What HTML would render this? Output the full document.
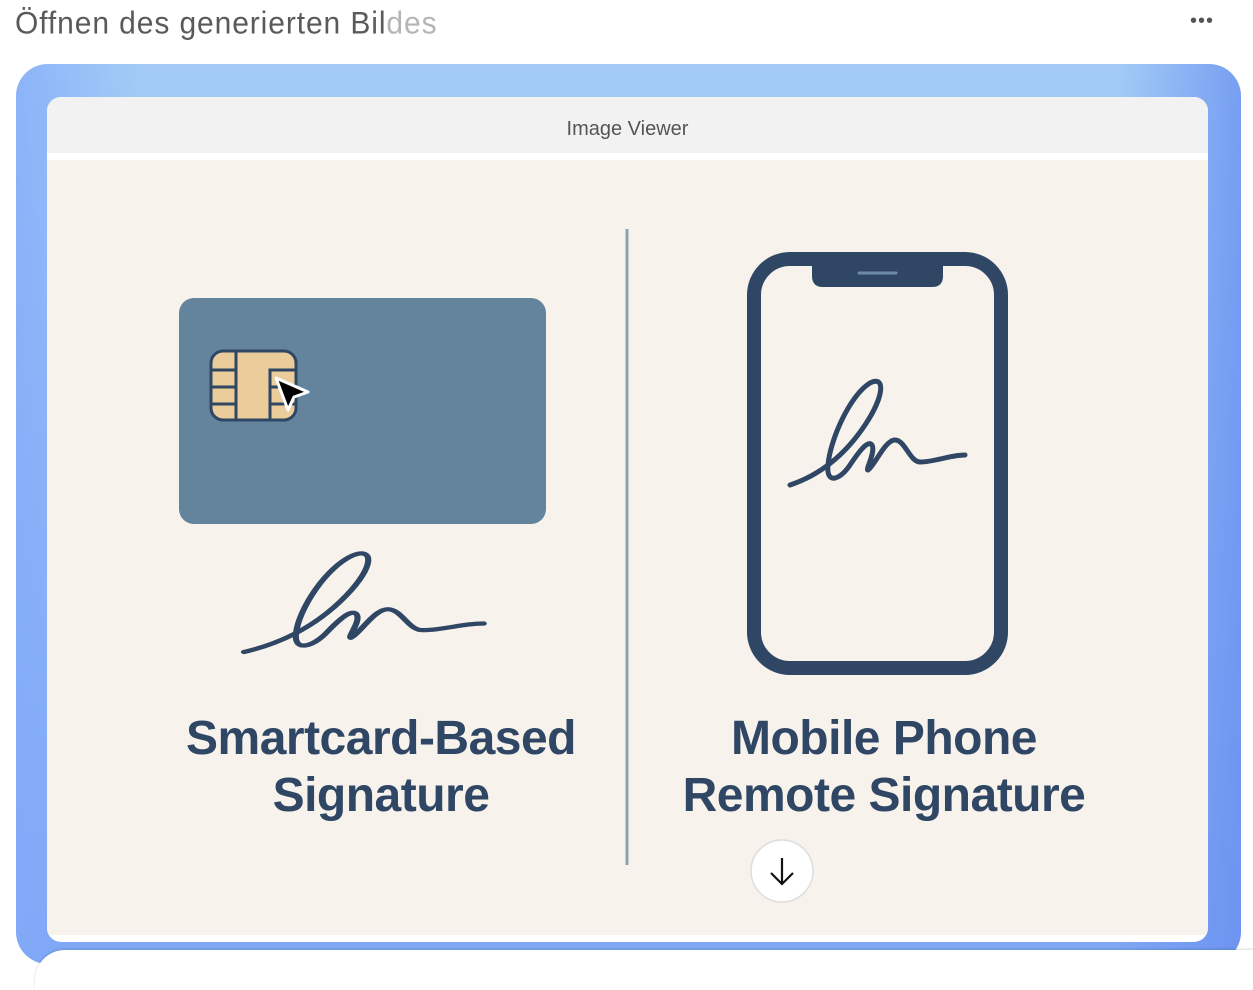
<!DOCTYPE html>
<html><head><meta charset="utf-8"><style>
body{margin:0;width:1253px;height:960px;overflow:hidden;background:#fff;font-family:"Liberation Sans",sans-serif;position:relative}
.title{position:absolute;left:15px;top:6px;font-size:30px;color:#5a5a5a;letter-spacing:0.9px;transform:scaleY(1.05);transform-origin:top left}
.title span{color:#b5b5b5}
.dots{position:absolute;left:1190px;top:10px;font-size:20px;color:#555;letter-spacing:1px}
.outer{position:absolute;left:16px;top:64px;width:1225px;height:900px;border-radius:32px;
background:linear-gradient(90deg,rgba(130,170,250,.7),rgba(180,200,250,0) 10%,rgba(0,0,0,0) 90%,rgba(100,140,240,.7)),
linear-gradient(180deg,#a3cbf6 0%,#93bdf5 40%,#7fa6f3 100%)}
.inner{position:absolute;left:47px;top:97px;width:1161px;height:845px;border-radius:14px;background:#fff;overflow:hidden}
.hdr{height:56px;background:#f2f2f2;text-align:center;line-height:64px;font-size:20px;color:#555}
.body{position:absolute;top:63px;left:0;width:1161px;height:775px;background:#f7f3ec}
.bottom{position:absolute;left:35px;top:950px;width:1240px;height:40px;background:#fff;border-radius:30px 0 0 0;box-shadow:0 -1px 2px rgba(0,0,0,.15)}
.t{position:absolute;font-weight:bold;font-size:48px;color:#2f4664;text-align:center;line-height:57px;letter-spacing:-0.5px}
</style></head><body>
<div class="title">Öffnen des generierten Bil<span>des</span></div>
<div class="dots">•••</div>
<div class="outer"></div>
<div class="inner"><div class="hdr">Image Viewer</div><div class="body"></div></div>
<div class="bottom"></div>
<svg width="1253" height="960" style="position:absolute;left:0;top:0">
<line x1="627" y1="229" x2="627" y2="865" stroke="#8fa0b0" stroke-width="3"/>
<rect x="179" y="298" width="367" height="226" rx="15" fill="#64849e"/>
<rect x="211" y="351" width="85" height="69" rx="12" fill="#ebcd9c" stroke="#2f4664" stroke-width="3"/>
<line x1="236" y1="352" x2="236" y2="419" stroke="#2f4664" stroke-width="3"/>
<line x1="212" y1="370" x2="236" y2="370" stroke="#2f4664" stroke-width="3"/>
<line x1="212" y1="387" x2="236" y2="387" stroke="#2f4664" stroke-width="3"/>
<line x1="212" y1="404" x2="236" y2="404" stroke="#2f4664" stroke-width="3"/>
<path d="M270,420 V370 H295" fill="none" stroke="#2f4664" stroke-width="3"/>
<line x1="270" y1="387" x2="295" y2="387" stroke="#2f4664" stroke-width="3"/>
<line x1="270" y1="404" x2="295" y2="404" stroke="#2f4664" stroke-width="3"/>
<path d="M276,378 L308,392 L294,397 L288,410 Z" fill="#000" stroke="#fff" stroke-width="3" stroke-linejoin="round"/>
<path d="M790,485 C820,475 845,455 865,425 C885,395 885,375 870,383 C850,395 830,440 828,465 C826,485 840,480 850,465 C860,450 868,440 872,445 C876,452 865,470 868,470 C875,465 885,440 895,440 C905,440 910,462 920,462 C935,462 950,455 965,455" fill="none" stroke="#2f4664" stroke-width="5" stroke-linecap="round"/>
<g transform="translate(244,652) scale(1.37,0.95) translate(-790,-485)"><path d="M790,485 C820,475 845,455 865,425 C885,395 885,375 870,383 C850,395 830,440 828,465 C826,485 840,480 850,465 C860,450 868,440 872,445 C876,452 865,470 868,470 C875,465 885,440 895,440 C905,440 910,462 920,462 C935,462 950,455 965,455" fill="none" stroke="#2f4664" stroke-width="4.5" stroke-linecap="round"/></g>
<rect x="754" y="259" width="247" height="409" rx="36" fill="none" stroke="#2f4664" stroke-width="14"/>
<path d="M812,262 H943 V276 Q943,287 932,287 H823 Q812,287 812,276 Z" fill="#2f4664"/>
<line x1="859" y1="273" x2="896" y2="273" stroke="#6d8ba8" stroke-width="3" stroke-linecap="round"/>
<circle cx="782" cy="871" r="31" fill="#fff" stroke="#ddd" stroke-width="1.5"/>
<path d="M782,858 V884 M771,873 L782,884 L793,873" fill="none" stroke="#111" stroke-width="2.2"/>
</svg>
<div class="t" style="left:131px;width:500px;top:710px">Smartcard-Based<br>Signature</div>
<div class="t" style="left:634px;width:500px;top:710px">Mobile Phone<br>Remote Signature</div>
</body></html>
